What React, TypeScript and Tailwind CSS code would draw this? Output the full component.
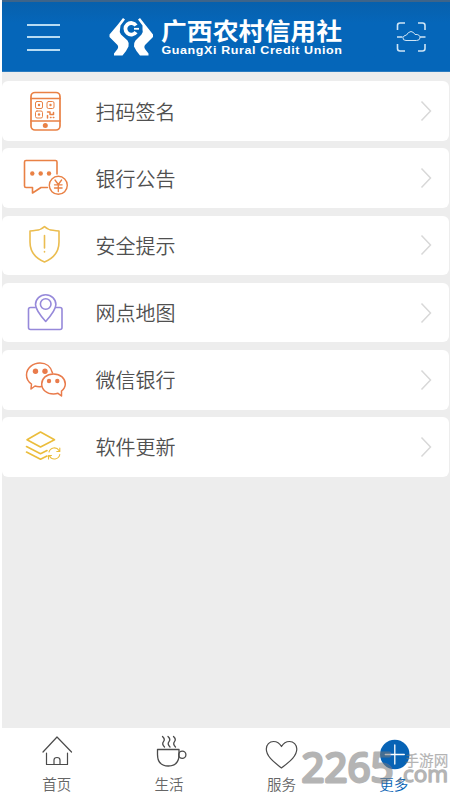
import type { ReactNode } from 'react';

interface MenuItem {
  title: string;
  icon: ReactNode;
}

const menuItems: MenuItem[] = [
  {
    title: '扫码签名',
    icon: (
      <g stroke="#e98145" strokeWidth="1.7">
        <rect x="31" y="11.5" width="29" height="37.5" rx="4" />
        <path d="M31 17.5h29M31 40h29" />
        <g strokeWidth="1">
          <rect x="35.5" y="20.5" width="7" height="7" rx="1.5" />
          <rect x="47" y="20.5" width="7" height="7" rx="1.5" />
          <rect x="35.5" y="30" width="7" height="7" rx="1.5" />
        </g>
        <g fill="#e98145" stroke="none">
          <circle cx="39" cy="24" r="1.2" />
          <circle cx="50.5" cy="24" r="1.2" />
          <circle cx="39" cy="33.5" r="1.2" />
          <circle cx="45.3" cy="44.5" r="2.5" />
        </g>
        <path d="M47.5 37v-2.5M47.5 31h2.5v2.5h3.5v-2M50.5 36.5h.5M53.3 36.5h.5" strokeWidth="1.5" />
      </g>
    ),
  },
  {
    title: '银行公告',
    icon: (
      <g stroke="#e98145" strokeWidth="1.6">
        <path d="M47.5 39.5H41L32.5 45V39.5H26Q24.5 39.5 24.5 38V14Q24.5 12.5 26 12.5H55.5Q57 12.5 57 14V26" />
        <g fill="#e98145" stroke="none">
          <circle cx="32.3" cy="25.5" r="2.2" />
          <circle cx="40.7" cy="25.5" r="2.2" />
          <circle cx="49" cy="25.5" r="2.2" />
        </g>
        <circle cx="58.3" cy="37.3" r="9" strokeWidth="1.4" />
        <path d="M55 32l3.3 4.5L61.6 32M58.3 36.5v7M54.5 36.8h7.6M54.5 40h7.6" strokeWidth="1.3" />
      </g>
    ),
  },
  {
    title: '安全提示',
    icon: (
      <g stroke="#ebbd50" strokeWidth="1.6">
        <path d="M44.5 11.5Q41 15 36 15.3Q33 15.8 30 16V27Q30 41 44.5 47Q59 41 59 27V16Q56 15.8 53 15.3Q48 15 44.5 11.5Z" />
        <path d="M44.5 20.5V33M44.5 36.5V37" />
      </g>
    ),
  },
  {
    title: '网点地图',
    icon: (
      <g stroke="#9689da" strokeWidth="1.6">
        <path d="M35 24.5H30.5Q28.5 24.5 28.5 26.5V44.5Q28.5 46.5 30.5 46.5H60Q62 46.5 62 44.5V26.5Q62 24.5 60 24.5H56.5" />
        <path d="M45.7 38.5Q35.5 27 35.5 21.5A10.2 9.8 0 0 1 55.9 21.5Q55.9 27 45.7 38.5Z" />
        <circle cx="45.7" cy="21" r="5.3" />
      </g>
    ),
  },
  {
    title: '微信银行',
    icon: (
      <g stroke="#e97b4b" strokeWidth="1.5">
        <path d="M41.5 36.5Q38 37 35 36L31 39L31.5 34C27 31 26.5 28 26.5 25C26.5 18 33 13 40 13C46 13 51 16.5 52.5 23" />
        <path d="M53.5 24C46.5 24 41.7 28.5 41.7 34C41.7 40 47 44 53.5 44Q56 44 58 43.3L61.5 46L61.5 41C64 39 65.3 37 65.3 34C65.3 28.5 60.5 24 53.5 24Z" />
        <g fill="#e97b4b" stroke="none">
          <circle cx="35.5" cy="21.3" r="2.7" />
          <circle cx="45" cy="21.3" r="2.7" />
          <circle cx="49" cy="31" r="2.2" />
          <circle cx="57.3" cy="31" r="2.2" />
        </g>
      </g>
    ),
  },
  {
    title: '软件更新',
    icon: (
      <g stroke="#ebbd3c" strokeWidth="1.6">
        <path d="M27 22.8L40.5 15L54.5 22.8L40.5 30Z" />
        <path d="M26.5 29.5L40.5 36.7L47 33.5M26.5 35L40.5 42.2L47 39" />
        <g strokeWidth="1.1">
          <path d="M49 35A5.5 5.5 0 0 1 59 33.5M59.8 31v3.5h-3" />
          <path d="M59.8 37.5A5.5 5.5 0 0 1 49.5 39M48.5 42V38.5h3" />
        </g>
      </g>
    ),
  },
];

const tabs: MenuItem[] = [
  {
    title: '首页',
    icon: (
      <g stroke="#4b4b4b" strokeWidth="1.2">
        <path d="M10 24L24 9L38.5 24M13.5 25V36.5H34.5V25" />
        <path d="M21 36.5V32Q21 29.5 24 29.5Q27 29.5 27 32V36.5" />
      </g>
    ),
  },
  {
    title: '生活',
    icon: (
      <g stroke="#4b4b4b" strokeWidth="1.3">
        <path d="M12.5 21.5H34V26.5Q34 38 23.3 38Q12.5 38 12.5 26.5Z" />
        <circle cx="37.3" cy="26.8" r="3.6" />
        <path d="M17.5 8.5q3 2.7 1 5.2t1 5.3M23 8.5q3 2.7 1 5.2t1 5.3M28.5 8.5q3 2.7 1 5.2t1 5.3" />
      </g>
    ),
  },
  {
    title: '服务',
    icon: (
      <path
        d="M24.5 40C17 34 9.3 28.5 9.3 21C9.3 16.5 12.5 13.5 16.5 13.5C20.5 13.5 22.5 15 24.5 18.5C26.5 15 28.5 13.5 32.5 13.5C36.5 13.5 39.8 16.5 39.8 21C39.8 28.5 32 34 24.5 40Z"
        stroke="#4b4b4b"
        strokeWidth="1.2"
      />
    ),
  },
  {
    title: '更多',
    icon: (
      <g>
        <circle cx="24.8" cy="26.5" r="14.7" fill="#0763b5" />
        <path d="M24.8 17V36M15.3 26.5H34.3" stroke="#fff" strokeWidth="1.3" />
      </g>
    ),
  },
];

function Header() {
  return (
    <header className="flex h-[72px] shrink-0 items-center border-t-2 border-b border-t-[#3e6489] border-b-[#2b7cc0] bg-gradient-to-b from-[#0760ac] to-[#0566b9] to-30% text-white">
      <div className="mt-px ml-[25px] flex w-[33px] flex-col gap-[10.5px]">
        <span className="h-[2px] bg-[#b8dcf3]"></span>
        <span className="h-[2px] bg-[#b8dcf3]"></span>
        <span className="h-[2px] bg-[#b8dcf3]"></span>
      </div>

      <svg className="ml-[48px] h-10 w-[46px] shrink-0" viewBox="108 17 46 40" fill="none">
        <path d="M123 18L117.5 25L109.5 34.5V37L117 44.5Q119 46.5 117.5 49L114 53.5V55.500H122.500Q126.500 51 128.500 46.500Q129.500 43 127.500 40.500L121 34.500Q119 32 120 29.500L120.500 25.500L125 19.500Z" fill="#fff" />
        <path d="M140 18L145.500 25L153 34.500V37L145.500 44.500Q143.500 46.500 145 49L148.500 53.500V55.500H140Q136 51 134 46.500Q133.500 43 135.500 40.500L141.500 34.500Q143.500 32 142.500 29.500L142.500 25.500L138 19.500Z" fill="#fff" />
        <path d="M136 25.500A5.800 5.800 0 1 0 136 32.100" stroke="#fff" strokeWidth="3.800" />
        <path d="M134 28.800H139" stroke="#fff" strokeWidth="1.800" />
      </svg>

      <svg className="ml-[7px] h-[44px] w-[182px] shrink-0" viewBox="161 15 182 44" fill="#fff" fontWeight="700">
        <text x="161" y="40" fontFamily="Noto Sans CJK SC, sans-serif" fontSize="23.500" textLength="181" lengthAdjust="spacingAndGlyphs">广西农村信用社</text>
        <text x="161.500" y="54" fontFamily="Liberation Sans, sans-serif" fontSize="10.300" letterSpacing=".5" textLength="181" lengthAdjust="spacingAndGlyphs">
          GuangXi Rural Credit Union
        </text>
      </svg>

      <svg className="ml-[52px] h-8 w-8" viewBox="395 21 32 32" fill="none" stroke="#cfe5f5" strokeWidth="1.6">
        <path d="M405 23H400Q397.500 23 397.500 25.500V30M418 23H422.500Q425 23 425 25.500V30M397.500 44V48.500Q397.500 51 400 51H405M418 51H422.500Q425 51 425 48.500V44M397 37H402.500M420 37H425.500" />
        <path d="M406 40.500Q402.500 40.500 403 37.500Q403.500 35.500 406.500 35Q408 32 411 31.500Q414 32 415 34.500Q420 34 420 38Q419.500 40.500 416.500 40.500Z" strokeWidth="1" />
      </svg>
    </header>
  );
}

function Watermark() {
  return (
    <svg className="pointer-events-none absolute right-0 bottom-0 h-[70px] w-[155px]" viewBox="295 730 155 70" fill="#777" stroke="#777" strokeLinejoin="round" opacity=".55">
      <text x="301.500" y="782" fontFamily="Open Sans, sans-serif" fontWeight="400" fontSize="41" strokeWidth="3" textLength="92" lengthAdjust="spacingAndGlyphs">2265</text>
      <text x="404.500" y="766" fontFamily="Noto Sans CJK SC, sans-serif" fontWeight="400" fontSize="14.600" strokeWidth=".2">手游网</text>
      <text x="397" y="782" fontFamily="Open Sans, sans-serif" fontWeight="400" fontSize="21" strokeWidth="1.300" textLength="51" lengthAdjust="spacingAndGlyphs">.com</text>
    </svg>
  );
}

export default function App() {
  return (
    <div className="relative flex h-[800px] w-[450px] flex-col overflow-hidden bg-white pl-[2px] font-['Noto_Sans_CJK_SC',sans-serif]">
      <Header />

      {/* Menu list */}
      <main className="flex h-[656px] shrink-0 flex-col gap-[7.7px] bg-[#ededed] pt-[9.3px] pr-px">
        {menuItems.map((item) => (
          <button key={item.title} className="flex h-[59.5px] shrink-0 items-center rounded-[6px] bg-white text-left">
            <svg className="ml-[18px] h-[60px] w-[50px] shrink-0" viewBox="20 0 50 60" fill="none" strokeLinecap="round" strokeLinejoin="round">
              {item.icon}
            </svg>
            <span className="mt-px ml-[25.5px] flex-1 text-[20px] font-[350] text-[#505050]">{item.title}</span>
            <svg className="mr-[17px] h-6 w-3" viewBox="0 0 12 24" fill="none" stroke="#d8d8d8" strokeWidth="1.5">
              <path d="M1.5 2.5L10.5 12L1.5 21.5" />
            </svg>
          </button>
        ))}
      </main>

      {/* Bottom tabs */}
      <nav className="-ml-[1.5px] grid h-[72px] shrink-0 grid-cols-4">
        {tabs.map((tab) => (
          <div key={tab.title} className="flex flex-col items-center">
            <svg className="h-[44px] w-[48px]" viewBox="0 0 48 44" fill="none" strokeLinecap="round" strokeLinejoin="round">
              {tab.icon}
            </svg>
            <span className={`mt-px text-[14.5px] leading-[22px] font-[350] ${tab.title === '更多' ? 'text-[#0763b5]' : 'text-[#666]'}`}>{tab.title}</span>
          </div>
        ))}
      </nav>

      <Watermark />
    </div>
  );
}
